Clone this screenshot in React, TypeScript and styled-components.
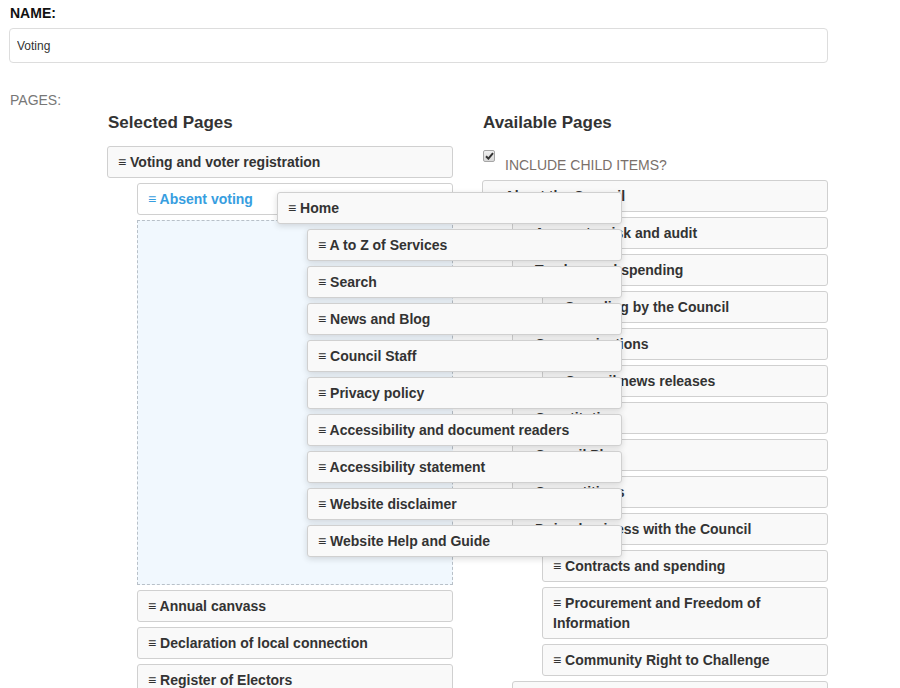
import React from "react";
import styled, { createGlobalStyle } from "styled-components";

type PageNode = { title: string; children?: PageNode[] };

const available: PageNode[] = [
  {
    title: "About the Council",
    children: [
      { title: "Accounts, risk and audit" },
      { title: "Tenders and spending", children: [{ title: "Spending by the Council" }] },
      { title: "Communications", children: [{ title: "Council news releases" }] },
      { title: "Constitution" },
      { title: "Council Plan" },
      { title: "Competitions" },
      {
        title: "Doing business with the Council",
        children: [
          { title: "Contracts and spending" },
          { title: "Procurement and Freedom of Information" },
          { title: "Community Right to Challenge" },
        ],
      },
      { title: "Elections and voting" },
    ],
  },
];

const dragged: PageNode = {
  title: "Home",
  children: [
    { title: "A to Z of Services" },
    { title: "Search" },
    { title: "News and Blog" },
    { title: "Council Staff" },
    { title: "Privacy policy" },
    { title: "Accessibility and document readers" },
    { title: "Accessibility statement" },
    { title: "Website disclaimer" },
    { title: "Website Help and Guide" },
  ],
};

const selectedAfter = ["Annual canvass", "Declaration of local connection", "Register of Electors"];

// renders a page and its children, nested lists are indented
function TreeNode({ node, lifted }: { node: PageNode; lifted?: boolean }) {
  return (
    <Node>
      <ItemRow $lifted={lifted}>≡ {node.title}</ItemRow>
      {node.children && (
        <Tree $nested>
          {node.children.map((child) => (
            <TreeNode key={child.title} node={child} lifted={lifted} />
          ))}
        </Tree>
      )}
    </Node>
  );
}

export default function App() {
  return (
    <Page>
      <GlobalStyle />
      <FieldLabel>NAME:</FieldLabel>
      <NameInput defaultValue="Voting" />
      <SectionLabel>PAGES:</SectionLabel>

      <Columns>
        <Column>
          <ColumnTitle>Selected Pages</ColumnTitle>
          <Tree>
            <Node>
              <ItemRow>≡ Voting and voter registration</ItemRow>
              <Tree $nested>
                <Node>
                  <ItemRow $active>≡ Absent voting</ItemRow>
                </Node>
                <DropPlaceholder />
                {selectedAfter.map((title) => (
                  <Node key={title}>
                    <ItemRow>≡ {title}</ItemRow>
                  </Node>
                ))}
              </Tree>
            </Node>
          </Tree>
        </Column>

        <Column>
          <ColumnTitle>Available Pages</ColumnTitle>
          <CheckRow>
            <CheckBox>
              <svg width="9" height="8" viewBox="0 0 9 8">
                <path d="M1 4.2 L3.4 6.6 L8 1.2" fill="none" stroke="#333" strokeWidth="2" />
              </svg>
            </CheckBox>
            <CheckLabel>INCLUDE CHILD ITEMS?</CheckLabel>
          </CheckRow>
          <Tree>
            {available.map((node) => (
              <TreeNode key={node.title} node={node} />
            ))}
          </Tree>
        </Column>
      </Columns>

      <DragLayer>
        <TreeNode node={dragged} lifted />
      </DragLayer>
    </Page>
  );
}

const GlobalStyle = createGlobalStyle`
  body {
    margin: 0;
    background: #fff;
    font-family: "Liberation Sans", Arial, sans-serif;
    color: #333;
  }
`;

const Page = styled.div`
  position: relative;
  width: 819px;
  height: 688px;
  padding: 0 9px;
  overflow: hidden;
`;

const FieldLabel = styled.div`
  padding: 3px 0 0 1px;
  margin-bottom: 5px;
  font-size: 14px;
  line-height: 20px;
  font-weight: 700;
  color: #111;
`;

const NameInput = styled.input`
  display: block;
  box-sizing: border-box;
  width: 819px;
  height: 35px;
  margin: 0;
  padding: 0 7px;
  border: 1px solid #ddd;
  border-radius: 4px;
  font-family: inherit;
  font-size: 12px;
  color: #333;
  outline: none;
`;

const SectionLabel = styled.div`
  margin: 27px 0 0 1px;
  font-size: 14px;
  line-height: 20px;
  color: #777;
`;

const Columns = styled.div`
  display: flex;
  gap: 29px;
  margin: 3px 0 0 98px;
`;

const Column = styled.div`
  display: flex;
  flex-direction: column;
  width: 346px;
`;

const ColumnTitle = styled.h4`
  margin: 0 0 13px 1px;
  font-size: 17px;
  line-height: 20px;
  font-weight: 700;
  color: #333;
`;

const Tree = styled.ol<{ $nested?: boolean }>`
  list-style: none;
  margin: 0;
  padding: 0 0 0 ${(p) => (p.$nested ? 30 : 0)}px;
  display: flex;
  flex-direction: column;
  gap: 5px;
`;

const Node = styled.li`
  display: flex;
  flex-direction: column;
  gap: 5px;
`;

const ItemRow = styled.div<{ $active?: boolean; $lifted?: boolean }>`
  box-sizing: border-box;
  min-height: 32px;
  padding: 5px 10px;
  border: 1px solid #d0d0d0;
  border-radius: 3px;
  background: ${(p) => (p.$active ? "#fff" : "#f9f9f9")};
  color: ${(p) => (p.$active ? "#379ee0" : "#333")};
  font-size: 14px;
  line-height: 20px;
  font-weight: 700;
  box-shadow: ${(p) => (p.$lifted ? "0 2px 6px rgba(0, 0, 0, 0.14)" : "none")};
`;

const DropPlaceholder = styled.li`
  box-sizing: border-box;
  height: 365px;
  border: 1px dashed #b8c0c8;
  background: #f1f8fe;
`;

const CheckRow = styled.div`
  display: flex;
  align-items: flex-start;
  padding-top: 4px;
  margin-bottom: 5px;
`;

const CheckBox = styled.span`
  box-sizing: border-box;
  display: flex;
  align-items: center;
  justify-content: center;
  width: 12px;
  height: 12px;
  margin-left: 1px;
  border: 1px solid #a6a6a6;
  border-radius: 2px;
  background: linear-gradient(#f0f0f0, #d8d8d8);
`;

const CheckLabel = styled.span`
  margin: 5px 0 0 10px;
  font-size: 14px;
  line-height: 20px;
  color: #7a706a;
`;

const DragLayer = styled.ol`
  list-style: none;
  position: absolute;
  left: 277px;
  top: 192px;
  width: 345px;
  margin: 0;
  padding: 0;
`;
